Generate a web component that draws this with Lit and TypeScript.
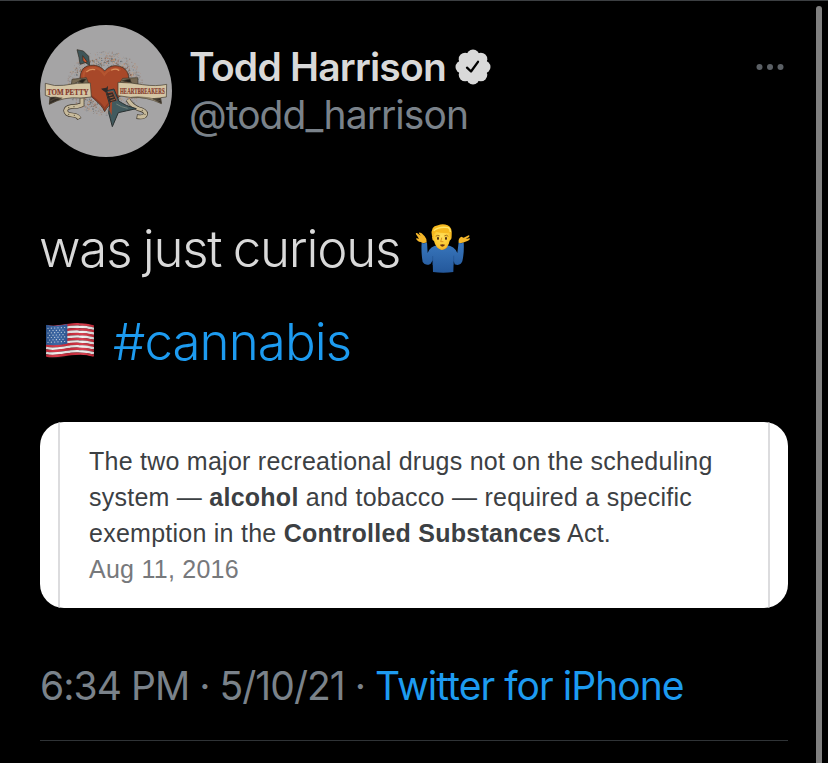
import { html, svg, LitElement, css } from "lit";
import { customElement } from "lit/decorators.js";

@customElement("tweet-avatar")
export class TweetAvatar extends LitElement {
  static styles = css`
    :host {
      display: block;
      width: 132px;
      height: 132px;
      flex: none;
    }

    svg {
      display: block;
    }

    .banner {
      font-family: "Liberation Serif", serif;
      font-weight: bold;
      fill: #84382b;
      stroke: #84382b;
      stroke-width: 0.6;
    }
  `;

  // Fine splatter around the heart, seeded so it never changes between renders
  private splatter() {
    const colors = ["#b9764f", "#6e665c", "#c9a07a", "#8a5f4c", "#59646b"];
    const dots = [];
    let seed = 17;
    const next = () => {
      seed = (seed * 16807) % 2147483647;
      return seed / 2147483647;
    };
    for (let i = 0; i < 1100; i++) {
      const angle = next() * Math.PI * 2;
      const reach = 0.55 + next() * 0.5;
      const x = 225 + Math.cos(angle) * 108 * reach;
      const y = 205 + Math.sin(angle) * 92 * reach;
      dots.push(svg`<circle
        cx=${x.toFixed(1)} cy=${y.toFixed(1)} r=${(0.8 + next() * 1.5).toFixed(1)}
        fill=${colors[i % colors.length]} opacity=${reach > 0.85 ? 0.4 : 0.75} />`);
    }
    return dots;
  }

  render() {
    return html`
      <svg width="132" height="132" viewBox="30 30 396 396">
        <circle cx="228" cy="228" r="198" fill="#a5a4a5" />
        ${this.splatter()}
        <g stroke="#30291f" stroke-width="2" stroke-linejoin="round">
          <path d="M141 104L160 108L176 124L179 151L166 143L150 148L147 128Z" fill="#3f5558" />
          <path d="M158 122L172 141L165 143L159 136Z" fill="#c9542c" />
          <path
            d="M224 290C214 263 174 243 158 216C143 187 151 153 182 151C202 149 217 158 224 168C235 153 257 147 277 157C300 169 302 199 285 226C268 251 235 266 224 290Z"
            fill="#a84829"
          />
        </g>
        <path d="M161 190C158 167 174 157 190 158C206 158 216 167 223 179C233 163 256 156 272 165" fill="none" stroke="#b95a33" stroke-width="6" opacity="0.75" />
        <path d="M170 170Q182 161 194 164M245 165Q258 159 266 166" fill="none" stroke="#dc925e" stroke-width="4" stroke-linecap="round" />
        <path d="M166 225C181 246 215 260 224 282C233 258 269 246 284 220" fill="none" stroke="#7f3522" stroke-width="4" opacity="0.7" />

        <g fill="none" stroke="#40382c" stroke-width="14">
          <path d="M156 250V269Q144 275 124 275Q108 277 107 287Q108 299 127 300Q143 301 148 312" />
          <path d="M294 254Q304 272 324 281Q347 286 347 297Q344 309 320 305" />
        </g>
        <g fill="none" stroke="#c8bb9c" stroke-width="10">
          <path d="M156 250V269Q144 275 124 275Q108 277 107 287Q108 299 127 300Q143 301 148 310" />
          <path d="M294 254Q304 272 324 281Q347 286 347 297Q344 309 322 305" />
        </g>
        <g stroke="#40382c" stroke-width="2" stroke-linejoin="round">
          <path d="M124 210L126 193L169 188L176 206L151 210L145 200Z" fill="#776a55" />
          <path d="M146 199Q157 190 168 193L157 205Z" fill="#26221d" />
          <path d="M46 205Q74 215 101 211Q145 202 181 204L184 246L153 249Q100 244 58 268L60 246L46 241Z" fill="#d4c5a4" />
          <path d="M58 267L61 247Q78 244 94 251Z" fill="#312b25" />
          <path d="M268 205L278 190L323 188L324 207L303 207L292 200Z" fill="#776a55" />
          <path d="M277 197L300 192L304 204Z" fill="#26221d" />
          <path d="M264 202Q300 202 338 209Q378 215 410 208L409 246L392 248L394 266Q348 244 307 248L264 242Z" fill="#d4c5a4" />
          <path d="M394 265L391 249L368 251Z" fill="#312b25" />
        </g>
        <path d="M61 259Q76 247 97 249M304 247Q347 243 390 257" fill="none" stroke="#5e5342" stroke-width="4" opacity="0.6" />
        <text class="banner" x="51" y="240" font-size="27" textLength="125" lengthAdjust="spacingAndGlyphs">TOM PETTY</text>
        <text class="banner" x="270" y="236" font-size="25" textLength="134" lengthAdjust="spacingAndGlyphs">HEARTBREAKERS</text>

        <g stroke-linejoin="round">
          <path d="M227 228L252 222L267 259Q286 273 319 281Q287 288 265 293L247 335L236 293L239 269Z" fill="#425a5e" stroke="#2a3131" stroke-width="3" />
          <path d="M229 232L249 228L261 256L246 262L245 301L238 286L241 266Z" fill="#a84a2c" />
          <path d="M232 235L248 232L259 257L240 262Z" fill="#342b29" />
          <path d="M235 242L247 239M238 249L251 246M241 257L255 253" stroke="#c67646" stroke-width="2" />
          <path d="M226 232L213 221L229 218L234 212L233 227Z" fill="#302c2b" />
          <path d="M218 222L230 229L241 263" fill="none" stroke="#302c2b" stroke-width="4" />
          <path d="M259 267Q274 277 293 280" fill="none" stroke="#75817a" stroke-width="3" />
        </g>
        <g fill="#5b5443">
          <circle cx="116" cy="278" r="2" />
          <circle cx="132" cy="275" r="2" />
          <circle cx="116" cy="298" r="2" />
          <circle cx="133" cy="301" r="2" />
          <circle cx="337" cy="286" r="2" />
          <circle cx="345" cy="298" r="2" />
        </g>
      </svg>
    `;
  }
}

@customElement("tweet-text")
export class TweetText extends LitElement {
  static styles = css`
    :host {
      display: flex;
      flex-direction: column;
      font-family: Inter, sans-serif;
      font-size: 51px;
      font-weight: 300;
      line-height: 93px;
      color: #d9d9d9;
    }

    .line {
      display: flex;
      align-items: center;
      height: 93px;
      white-space: nowrap;
    }

    .words {
      margin-left: -1px;
      letter-spacing: -1.2px;
      word-spacing: -1.8px;
    }

    .tag {
      color: #1d9bf0;
      letter-spacing: -0.9px;
      margin-left: 19px;
    }

    .shrug {
      margin: -1px 0 0 15px;
    }

    .flag {
      margin-left: 6px;
    }
  `;

  private shrug() {
    return html`
      <svg class="shrug" width="56" height="50" viewBox="45 40 168 150">
        <defs>
          <linearGradient id="sweater" x2="0" y2="1">
            <stop stop-color="#3977bd" />
            <stop offset="1" stop-color="#24589b" />
          </linearGradient>
          <radialGradient id="skin" cx="0.5" cy="0.45" r="0.65">
            <stop stop-color="#ffe05a" />
            <stop offset="0.65" stop-color="#fcc62d" />
            <stop offset="1" stop-color="#df911e" />
          </radialGradient>
        </defs>
        <path d="M65 99Q73 103 81 98L83 130Q91 109 113 107H140Q163 109 172 130L176 98Q184 104 191 98Q193 128 187 155Q181 170 164 164L161 154L160 187Q130 191 99 187L98 152L92 162Q77 171 68 157Q63 130 65 99Z" fill="url(#sweater)" />
        <path d="M98 139V166M161 138V166" stroke="#1d4b88" stroke-width="2" opacity="0.7" />
        <path d="M66 99Q63 96 57 96Q50 91 48 87Q48 84 57 87L48 74Q46 69 51 70L62 78L56 70Q58 67 65 71L74 80Q80 86 80 98Q73 102 66 99Z" fill="#f5b72a" />
        <path d="M176 99Q174 86 184 81L191 84L206 77Q211 78 207 82L197 88L209 86Q212 89 204 93L192 98Q184 102 176 99Z" fill="#f5b72a" />
        <path d="M111 107H142V113Q128 127 111 113Z" fill="#dc931f" />
        <path d="M99 76Q98 52 125 48Q151 51 152 77L155 82Q155 91 149 93Q145 116 125 121Q107 116 102 94Q96 92 96 83Z" fill="url(#skin)" />
        <path d="M96 79Q90 49 114 47Q128 40 143 47Q158 53 155 80L151 84L148 69Q125 72 108 66L101 75L101 85Z" fill="#f6b91f" />
        <path d="M101 63Q119 49 145 54Q151 58 151 67" fill="none" stroke="#ffe568" stroke-width="4" />
        <g fill="none" stroke="#744110" stroke-linecap="round">
          <path d="M108 79Q113 75 118 78M134 78Q139 74 144 79" stroke-width="2" />
          <path d="M125 85L122 96H129" stroke="#dc921e" stroke-width="3" />
        </g>
        <ellipse cx="114" cy="86" rx="3" ry="5" fill="#4d2d13" />
        <ellipse cx="138" cy="86" rx="3" ry="5" fill="#4d2d13" />
        <path d="M120 105Q127 102 135 105Q134 110 127 111Q121 110 120 105Z" fill="#683012" />
      </svg>
    `;
  }

  private flag() {
    // Each stripe follows the same wave, 7.35 units below the one before
    const stripes = Array.from({ length: 13 }, (_, i) => {
      const y = 45 + i * 7.35;
      return svg`<path d=${`M48 ${y}C83 ${y + 8} 108 ${y - 7} 146 ${y - 5}Q170 ${y - 5} 192 ${y + 1}`}
        fill="none" stroke=${i % 2 ? "#f1efef" : "#d22c3d"} stroke-width="7.7" />`;
    });
    const stars = [];
    for (let row = 0; row < 7; row++) {
      for (let col = 0; col < 6 - (row % 2); col++) {
        const x = 54 + col * 10 + (row % 2) * 5;
        stars.push(svg`<circle cx=${x} cy=${52 + row * 7 - col * 0.5} r="1.8" />`);
      }
    }
    return html`
      <svg class="flag" width="48" height="37" viewBox="48 36 144 111">
        <defs>
          <clipPath id="cloth">
            <path d="M51 41C83 49 108 34 146 36Q170 36 190 42Q192 43 192 46V134Q192 138 188 137Q155 127 123 135Q83 146 51 140Q48 139 48 136V43Q48 41 51 41Z" />
          </clipPath>
          <linearGradient id="folds">
            <stop stop-color="#000" stop-opacity="0.14" />
            <stop offset="0.22" stop-color="#fff" stop-opacity="0.07" />
            <stop offset="0.48" stop-color="#000" stop-opacity="0.09" />
            <stop offset="0.75" stop-color="#fff" stop-opacity="0.1" />
            <stop offset="1" stop-color="#000" stop-opacity="0.14" />
          </linearGradient>
        </defs>
        <g clip-path="url(#cloth)">
          ${stripes}
          <path d="M48 41Q80 48 112 39V98Q80 105 48 101Z" fill="#2e5b9c" />
          <g fill="#d7dfeb">${stars}</g>
          <path d="M48 36H192V147H48Z" fill="url(#folds)" />
        </g>
      </svg>
    `;
  }

  render() {
    return html`
      <div class="line"><span class="words">was just curious</span>${this.shrug()}</div>
      <div class="line">${this.flag()}<span class="tag">#cannabis</span></div>
    `;
  }
}

@customElement("snippet-card")
export class SnippetCard extends LitElement {
  static styles = css`
    :host {
      display: block;
      box-sizing: border-box;
      height: 186px;
      padding: 0 18px;
      overflow: hidden;
      background: #fff;
      border-radius: 24px;
    }

    .frame {
      box-sizing: border-box;
      height: 100%;
      padding: 21px 0 0 29px;
      border: solid #dcdcde;
      border-width: 0 2px;
      color: #3c4043;
      font-family: "Liberation Sans", Arial, sans-serif;
      font-size: 25px;
      line-height: 36px;
      letter-spacing: 0.25px;
      white-space: nowrap;
    }

    p {
      margin: 0;
    }

    .date {
      color: #77797c;
    }
  `;

  render() {
    return html`
      <div class="frame">
        <p>The two major recreational drugs not on the scheduling</p>
        <p>system — <b>alcohol</b> and tobacco — required a specific</p>
        <p>exemption in the <b>Controlled Substances</b> Act.</p>
        <p class="date">Aug 11, 2016</p>
      </div>
    `;
  }
}

@customElement("app-root")
export class AppRoot extends LitElement {
  static styles = css`
    :host {
      display: flex;
      box-sizing: border-box;
      height: 763px;
      overflow: hidden;
      background: #000;
      border-top: 1px solid #3c3f42;
      font-family: Inter, sans-serif;
      font-size: 39px;
      line-height: 48px;
      white-space: nowrap;
    }

    .tweet {
      display: flex;
      flex-direction: column;
      width: 748px;
      padding: 24px 28px 0 40px;
    }

    header {
      display: flex;
      height: 132px;
    }

    .who {
      flex: 1;
      padding: 18px 0 0 17px;
    }

    .name {
      display: flex;
      align-items: center;
      gap: 9px;
      color: #d9d9d9;
      font-weight: 600;
    }

    .name span {
      letter-spacing: -0.8px;
    }

    .handle {
      color: #7a828a;
      letter-spacing: -0.95px;
    }

    .more {
      margin: 38px 4px 0 0;
    }

    tweet-text {
      margin-top: 45px;
    }

    snippet-card {
      margin-top: 34px;
    }

    footer {
      height: 78px;
      margin-top: 54px;
      border-bottom: 1px solid #2f3336;
      color: #7a828a;
      letter-spacing: -0.95px;
    }

    .source {
      color: #1d9bf0;
    }

    .scrollbar {
      width: 6px;
      margin-top: 5px;
      background: #808080;
      border-radius: 3px 3px 0 0;
    }
  `;

  render() {
    return html`
      <article class="tweet">
        <header>
          <tweet-avatar></tweet-avatar>
          <div class="who">
            <div class="name">
              <span>Todd Harrison</span>
              <svg width="36" height="36" viewBox="0 0 36 36">
                <g fill="#d9d9d9">
                  <circle cx="18" cy="18" r="13.5" />
                  <circle cx="18" cy="7" r="6.5" />
                  <circle cx="25.8" cy="10.2" r="6.5" />
                  <circle cx="29" cy="18" r="6.5" />
                  <circle cx="25.8" cy="25.8" r="6.5" />
                  <circle cx="18" cy="29" r="6.5" />
                  <circle cx="10.2" cy="25.8" r="6.5" />
                  <circle cx="7" cy="18" r="6.5" />
                  <circle cx="10.2" cy="10.2" r="6.5" />
                </g>
                <path d="M12 18.7L16 22.5L23 12.8" fill="none" stroke="#000" stroke-width="2.3" stroke-linecap="round" stroke-linejoin="round" />
              </svg>
            </div>
            <div class="handle">@todd_harrison</div>
          </div>
          <svg class="more" width="28" height="8" viewBox="0 0 28 8" fill="#5b6065">
            <circle cx="3.5" cy="4" r="3" />
            <circle cx="14" cy="4" r="3" />
            <circle cx="24.5" cy="4" r="3" />
          </svg>
        </header>
        <tweet-text></tweet-text>
        <snippet-card></snippet-card>
        <footer>6:34 PM · 5/10/21 · <span class="source">Twitter for iPhone</span></footer>
      </article>
      <div class="scrollbar"></div>
    `;
  }
}
